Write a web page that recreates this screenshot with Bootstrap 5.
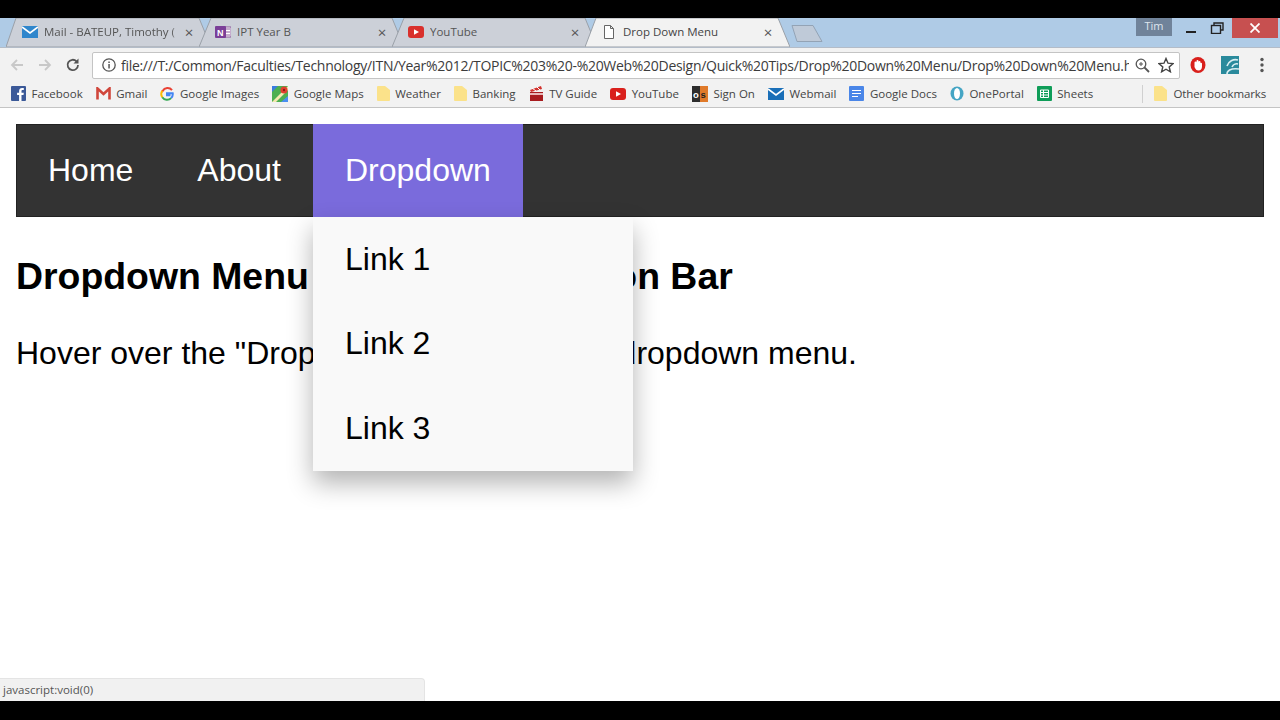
<!DOCTYPE html>
<html lang="en">
  <head>
    <meta charset="UTF-8" />
    <title>Drop Down Menu</title>
    <link href="https://cdn.jsdelivr.net/npm/bootstrap@5.3.0/dist/css/bootstrap.min.css" rel="stylesheet">
    <style>
      body { height: 720px; overflow: hidden; background: #000; font-family: "Liberation Sans", Arial, sans-serif; }
      .app-shell { height: 720px; padding: 18px 0 19px; }

      /* browser frame */
      .chrome-ui { font-family: "Open Sans", "Noto Sans", sans-serif; color: #4a4a4a; }
      .tab-strip { height: 29px; background: #afcbe6; padding-left: 6px; }
      .strip-tab { width: 205px; margin-right: -12px; height: 29px; padding: 0 10px 1px 16px; font-size: 11.5px; flex-shrink: 0; color: #555; }
      .strip-tab.is-active { z-index: 2; color: #444; }
      .tab-shape { left: 0; top: 0; width: 100%; height: 100%; z-index: -1; }
      .tab-title { width: 137px; margin-left: 6px; white-space: nowrap; overflow: hidden; }
      .tab-title.fades { -webkit-mask-image: linear-gradient(90deg, #000 128px, transparent 133px); mask-image: linear-gradient(90deg, #000 128px, transparent 133px); }
      .tab-close { font-size: 15px; line-height: 1; margin-left: 2px; width: 12px; text-align: center; color: #555; }
      .tab-layer { z-index: 0; }
      .new-tab { margin-left: 13px; margin-top: 7px; width: 34px; height: 18px; z-index: 3; flex-shrink: 0; }
      .window-btns { height: 29px; }
      .user-chip { width: 36px; height: 18px; background: #70839a; color: #dfe6ee; font-size: 11px; line-height: 16px; text-align: center; margin-right: 6px; }
      .win-btn { width: 26px; height: 20px; }
      .win-close { width: 46px; height: 20px; background: #c75050; margin: 0 2px 0 2px; }

      .tool-row { height: 35px; background: #f2f2f2; padding: 4px 0 4px 0; border-top: 1px solid #b3bcc8; }
      .tool-nav { width: 92px; padding-left: 8px; gap: 10px; flex-shrink: 0; }
      .url-box { width: 1088px; height: 27px; background: #fff; border: 1px solid #c4c4c4; border-radius: 2px; padding: 0 5px 0 8px; flex-shrink: 0; }
      .url-text { width: 1008px; margin-left: 4px; font-size: 14px; letter-spacing: -.29px; line-height: 25px; white-space: nowrap; overflow: hidden; color: #3c3c3c; }
      .ext-row { padding-left: 2px; }
      .ext-slot { width: 32px; }

      .mark-row { height: 26px; background: #f2f2f2; border-bottom: 1px solid #c4c4c4; padding: 0 14px 2px 11px; font-size: 11.5px; color: #444; white-space: nowrap; }
      .mark-item { margin-right: 13px; }
      .mark-item svg { margin-right: 5.5px; flex-shrink: 0; }
      .mark-sep { width: 1px; height: 18px; background: #d0d0d0; margin: 0 11px 0 auto; }
      .other-folder { margin-right: 7px; }
      .other-label { letter-spacing: -.13px; }

      /* the page in the browser */
      .page-view { background: #fff; padding: 16px; }
      .site-bar.navbar { background: #333; padding: 0; box-shadow: inset 0 0 0 1px #222; }
      .site-link.nav-link { font-size: 32px; line-height: 36.8px; padding: 28px 32px; color: #fff; }
      .site-link.nav-link:hover, .site-link.nav-link:focus { color: #fff; }
      .site-link.is-open { background: #7a6bdc; }
      .site-menu.dropdown-menu { position: absolute; top: 100%; left: 0; width: 320px; margin: 0; padding: 0; border: 0; border-radius: 0; background: #f9f9f9; box-shadow: 0 12px 24px rgba(0,0,0,.3); z-index: 5; }
      .site-menu .dropdown-item { font-size: 32px; line-height: 36.67px; padding: 24px 32px; color: #000; }
      .page-title { font-size: 37.4px; font-weight: 700; line-height: 41px; margin: 39px 0 38px; color: #000; }
      .page-copy { font-size: 32px; line-height: 37px; color: #000; margin: 0; }
      .status-bubble { left: 0; bottom: 19px; width: 425px; height: 23px; background: #f1f1f1; border: 1px solid #e4e4e4; border-width: 1px 1px 0 0; border-top-right-radius: 4px; padding-left: 3px; font-size: 11.5px; line-height: 22px; color: #555; z-index: 6; }
    </style>
  </head>
  <body>
    <div class="app-shell d-flex flex-column position-relative">

      <div class="chrome-ui tab-strip d-flex">
        <div class="strip-tab position-relative d-flex align-items-center tab-layer">
          <svg class="tab-shape position-absolute" viewBox="0 0 205 29" preserveAspectRatio="none"><polygon points="0,29 10,0 193,0 205,29" fill="#ccd0d8" stroke="#9aa0a8"/></svg>
          <svg width="16" height="12" viewBox="0 0 16 12"><rect width="16" height="12" fill="#2f86cc"/><path d="M0 1l8 6 8-6" fill="none" stroke="#fff" stroke-width="1.6"/></svg>
          <span class="tab-title fades">Mail - BATEUP, Timothy (</span>
          <span class="tab-close">×</span>
        </div>
        <div class="strip-tab position-relative d-flex align-items-center tab-layer">
          <svg class="tab-shape position-absolute" viewBox="0 0 205 29" preserveAspectRatio="none"><polygon points="0,29 12,0 193,0 205,29" fill="#ccd0d8" stroke="#9aa0a8"/></svg>
          <svg width="16" height="14" viewBox="0 0 16 14"><rect x="6" y="2" width="10" height="10" fill="#fff" stroke="#8a5a9a"/><path d="M11 4h4M11 7h4M11 10h4" stroke="#8a5a9a"/><rect y="1" width="11" height="12" rx="1" fill="#7b3f98"/><text x="2" y="10.500" font-size="9" font-family="Liberation Sans" font-weight="700" fill="#fff">N</text></svg>
          <span class="tab-title">IPT Year B</span>
          <span class="tab-close">×</span>
        </div>
        <div class="strip-tab position-relative d-flex align-items-center tab-layer">
          <svg class="tab-shape position-absolute" viewBox="0 0 205 29" preserveAspectRatio="none"><polygon points="0,29 12,0 193,0 205,29" fill="#ccd0d8" stroke="#9aa0a8"/></svg>
          <svg width="16" height="12" viewBox="0 0 16 12"><rect width="16" height="12" rx="3" fill="#d9302c"/><path d="M6 3.200l5 2.800-5 2.800z" fill="#fff"/></svg>
          <span class="tab-title">YouTube</span>
          <span class="tab-close">×</span>
        </div>
        <div class="strip-tab is-active position-relative d-flex align-items-center">
          <svg class="tab-shape position-absolute" viewBox="0 0 205 29" preserveAspectRatio="none"><polygon points="0,29 11,0 193,0 205,29" fill="#f2f2f2" stroke="#9aa0a8"/></svg>
          <svg width="16" height="14" viewBox="0 0 16 14"><path d="M3.500.5h6l3 3v10h-9z M9.500.5v3h3" fill="#fff" stroke="#666"/></svg>
          <span class="tab-title">Drop Down Menu</span>
          <span class="tab-close">×</span>
        </div>
        <svg class="new-tab position-relative" viewBox="0 0 34 18"><polygon points="1,.5 22,.5 31,16.500 6,16.500" fill="#bfcad8" stroke="#93a3b5"/></svg>
        <div class="window-btns ms-auto d-flex align-items-start">
          <div class="user-chip">Tim</div>
          <div class="win-btn d-flex align-items-center justify-content-center"><svg width="12" height="12" viewBox="0 0 12 12"><rect x="1" y="9" width="10" height="2" fill="#222"/></svg></div>
          <div class="win-btn d-flex align-items-center justify-content-center"><svg width="14" height="12" viewBox="0 0 14 12"><rect x="1.500" y="3.500" width="9" height="8" fill="none" stroke="#222" stroke-width="1.4"/><path d="M4 3V1h9v7h-2" fill="none" stroke="#222" stroke-width="1.4"/></svg></div>
          <div class="win-close d-flex align-items-center justify-content-center"><svg width="10" height="10" viewBox="0 0 10 10"><path d="M.5.5l9 9M9.500.5l-9 9" stroke="#fff" stroke-width="1.800"/></svg></div>
        </div>
      </div>

      <div class="chrome-ui tool-row d-flex align-items-center">
        <div class="tool-nav d-flex align-items-center">
          <svg width="18" height="18" viewBox="0 0 18 18"><path d="M15 9H4M9 4L4 9l5 5" fill="none" stroke="#c8c8c8" stroke-width="1.800"/></svg>
          <svg width="18" height="18" viewBox="0 0 18 18"><path d="M3 9h11M9 4l5 5-5 5" fill="none" stroke="#c8c8c8" stroke-width="1.800"/></svg>
          <svg width="18" height="18" viewBox="0 0 18 18"><path d="M14 9a5.200 5.200 0 1 1-1.500-3.700" fill="none" stroke="#555" stroke-width="1.800"/><path d="M14.500 2.500v5h-5z" fill="#555"/></svg>
        </div>
        <div class="url-box d-flex align-items-center">
          <svg width="16" height="16" viewBox="0 0 16 16" class="flex-shrink-0"><circle cx="8" cy="8" r="6.200" fill="none" stroke="#555" stroke-width="1.300"/><rect x="7.300" y="7" width="1.500" height="4.500" fill="#555"/><rect x="7.300" y="4.500" width="1.500" height="1.500" fill="#555"/></svg>
          <div class="url-text flex-shrink-0">file:///T:/Common/Faculties/Technology/ITN/Year%2012/TOPIC%203%20-%20Web%20Design/Quick%20Tips/Drop%20Down%20Menu/Drop%20Down%20Menu.h</div>
          <svg class="ms-auto flex-shrink-0" width="16" height="16" viewBox="0 0 16 16"><circle cx="7" cy="7" r="4.800" fill="none" stroke="#555" stroke-width="1.300"/><path d="M10.500 10.500L15 15" stroke="#555" stroke-width="1.800"/><path d="M5 7h4M7 5v4" stroke="#555"/></svg>
          <svg class="ms-2 flex-shrink-0" width="16" height="16" viewBox="0 0 16 16"><polygon points="8,1.500 10,6.200 15,6.600 11.200,9.900 12.400,14.800 8,12.200 3.600,14.800 4.800,9.900 1,6.600 6,6.200" fill="none" stroke="#444" stroke-width="1.400"/></svg>
        </div>
        <div class="ext-row d-flex align-items-center">
          <div class="ext-slot d-flex justify-content-center"><svg width="18" height="18" viewBox="0 0 18 18"><ellipse cx="9" cy="9" rx="7.500" ry="8" fill="#d9201c"/><path d="M5.500 9.500V6.500a1 1 0 0 1 2 0V5a1 1 0 0 1 2 0v1a1 1 0 0 1 2 0v1a1 1 0 0 1 1.500.5v3c0 2.500-1.500 4-3.500 4s-3-1-4-3.500z" fill="#fff"/></svg></div>
          <div class="ext-slot d-flex justify-content-center"><svg width="18" height="18" viewBox="0 0 18 18"><rect width="18" height="18" fill="#2a8a9c"/><path d="M17 4a9 9 0 0 0-11 6M17 8a5 5 0 0 0-6 3M6 18c0-3 3-6 12-5" fill="none" stroke="#d8eef2" stroke-width="1.600"/></svg></div>
          <div class="ext-slot d-flex justify-content-center"><svg width="14" height="18" viewBox="0 0 14 18"><circle cx="7" cy="3.500" r="1.700" fill="#555"/><circle cx="7" cy="9" r="1.700" fill="#555"/><circle cx="7" cy="14.500" r="1.700" fill="#555"/></svg></div>
        </div>
      </div>

      <div class="chrome-ui mark-row d-flex align-items-center">
        <div class="mark-item d-flex align-items-center"><svg width="15" height="15" viewBox="0 0 15 15"><rect width="15" height="15" rx="1" fill="#3b5998"/><path d="M10.500 15V9h2l.3-2.300h-2.300V5.200c0-.7.200-1.100 1.100-1.100h1.200V2.100c-.3 0-1-.1-1.700-.1-1.800 0-3 1.100-3 3v1.700h-2V9h2v6z" fill="#fff"/></svg>Facebook</div>
        <div class="mark-item d-flex align-items-center"><svg width="15" height="13" viewBox="0 0 15 13"><path d="M1.500 12.500V1.500l6 5.500 6-5.500v11" fill="none" stroke="#d0463b" stroke-width="2.600"/></svg>Gmail</div>
        <div class="mark-item d-flex align-items-center"><svg width="14" height="14" viewBox="0 0 14 14"><path d="M12 3.200A5.700 5.700 0 0 0 2.600 4L1.400 5" fill="none" stroke="#e94235" stroke-width="2"/><path d="M2.300 3.800a5.700 5.700 0 0 0 0 6.400" fill="none" stroke="#fabb05" stroke-width="2"/><path d="M2.300 10.200a5.700 5.700 0 0 0 8.800.9" fill="none" stroke="#34a853" stroke-width="2"/><path d="M11.100 11.100A5.700 5.700 0 0 0 12.700 6.200H7v2h3.500" fill="none" stroke="#4285f4" stroke-width="2"/></svg>Google Images</div>
        <div class="mark-item d-flex align-items-center"><svg width="16" height="16" viewBox="0 0 16 16"><rect width="16" height="16" fill="#4caf50"/><path d="M0 16L16 0v4L4 16z" fill="#f4e9b0"/><path d="M9 16l7-6v6z" fill="#4a8ff0"/><path d="M0 0h6L0 6z" fill="#3a7de0"/><circle cx="12" cy="4" r="3.500" fill="#e2402f"/><circle cx="12" cy="4" r="1.200" fill="#8a1e14"/></svg>Google Maps</div>
        <div class="mark-item d-flex align-items-center"><svg width="13" height="15" viewBox="0 0 13 15"><path d="M0 1a1 1 0 0 1 1-1h7l5 4v10a1 1 0 0 1-1 1H1a1 1 0 0 1-1-1z" fill="#fbe28a"/></svg>Weather</div>
        <div class="mark-item d-flex align-items-center"><svg width="13" height="15" viewBox="0 0 13 15"><path d="M0 1a1 1 0 0 1 1-1h7l5 4v10a1 1 0 0 1-1 1H1a1 1 0 0 1-1-1z" fill="#fbe28a"/></svg>Banking</div>
        <div class="mark-item d-flex align-items-center"><svg width="15" height="15" viewBox="0 0 15 15"><path d="M1 4l11-4 1 3-11 3z" fill="#d2322d"/><path d="M3 2l4 3M8 1l3 3" stroke="#fff"/><rect x="1" y="6" width="13" height="9" fill="#a81c1f"/><rect x="1" y="7" width="13" height="2" fill="#e8b7b7"/></svg>TV Guide</div>
        <div class="mark-item d-flex align-items-center"><svg width="16" height="12" viewBox="0 0 16 12"><rect width="16" height="12" rx="3" fill="#d9201c"/><path d="M6 3.200l5 2.800-5 2.800z" fill="#fff"/></svg>YouTube</div>
        <div class="mark-item d-flex align-items-center"><svg width="16" height="16" viewBox="0 0 16 16"><rect width="16" height="16" fill="#2d2d2d"/><rect x="8" width="8" height="16" fill="#e07a2a"/><text x="1" y="12" font-size="9.500" font-family="Liberation Sans" font-weight="700" fill="#fff">o</text><text x="8.500" y="12" font-size="9.500" font-family="Liberation Sans" font-weight="700" fill="#222">s</text></svg>Sign On</div>
        <div class="mark-item d-flex align-items-center"><svg width="16" height="12" viewBox="0 0 16 12"><rect width="16" height="12" fill="#1a6fb8"/><path d="M0 1l8 6 8-6" fill="none" stroke="#fff" stroke-width="1.600"/></svg>Webmail</div>
        <div class="mark-item d-flex align-items-center"><svg width="15" height="15" viewBox="0 0 15 15"><rect width="15" height="15" rx="1" fill="#4a86e8"/><path d="M3 4.500h9M3 7.500h9M3 10.500h6" stroke="#fff" stroke-width="1.200"/></svg>Google Docs</div>
        <div class="mark-item d-flex align-items-center"><svg width="14" height="15" viewBox="0 0 14 15"><ellipse cx="7" cy="7.500" rx="6.500" ry="7" fill="#45a5c4"/><ellipse cx="7" cy="7.500" rx="3" ry="5.500" fill="#fff"/></svg>OnePortal</div>
        <div class="mark-item d-flex align-items-center"><svg width="15" height="15" viewBox="0 0 15 15"><rect width="15" height="15" rx="1" fill="#0f9d58"/><path d="M3.500 4h8v7.500h-8zM3.500 6.500h8M3.500 9h8M6.500 4v7.500" fill="none" stroke="#fff"/></svg>Sheets</div>
        <div class="mark-sep"></div>
        <div class="d-flex align-items-center"><svg class="other-folder" width="13" height="15" viewBox="0 0 13 15"><path d="M0 1a1 1 0 0 1 1-1h7l5 4v10a1 1 0 0 1-1 1H1a1 1 0 0 1-1-1z" fill="#fbe28a"/></svg><span class="other-label">Other bookmarks</span></div>
      </div>

      <main class="page-view flex-grow-1">
        <nav class="site-bar navbar">
          <ul class="navbar-nav flex-row">
            <li class="nav-item"><a class="site-link nav-link" href="#">Home</a></li>
            <li class="nav-item"><a class="site-link nav-link" href="#">About</a></li>
            <li class="nav-item dropdown position-relative">
              <a class="site-link nav-link is-open" href="javascript:void(0)">Dropdown</a>
              <div class="site-menu dropdown-menu show">
                <a class="dropdown-item" href="#">Link 1</a>
                <a class="dropdown-item" href="#">Link 2</a>
                <a class="dropdown-item" href="#">Link 3</a>
              </div>
            </li>
          </ul>
        </nav>
        <h2 class="page-title">Dropdown Menu inside a Navigation Bar</h2>
        <p class="page-copy">Hover over the "Dropdown" link to see the dropdown menu.</p>
      </main>

      <div class="chrome-ui status-bubble position-absolute">javascript:void(0)</div>
    </div>
  </body>
</html>
